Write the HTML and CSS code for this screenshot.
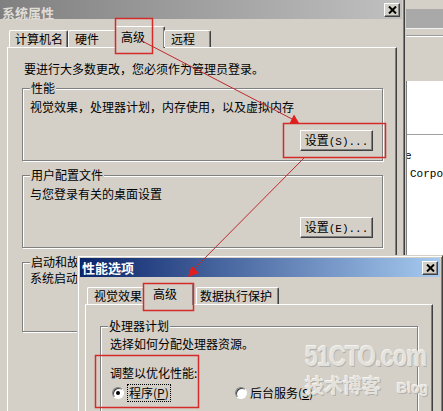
FILE: index.html
```html
<!DOCTYPE html>
<html lang="zh-CN">
<head>
    <meta charset="UTF-8">
    <meta name="viewport" content="width=device-width, initial-scale=1.0">
    <title>系统属性 - 性能选项</title>
    <link rel="stylesheet" href="styles.css">
</head>
<body>
    <div class="desk">
        <div class="bg-window">
            <div class="bg-title"></div>
            <div class="bg-menu">
                <div class="bg-rule"></div>
            </div>
            <div class="bg-client">
                <div class="bg-line"></div>
                <div class="bg-text cut">e</div>
                <div class="bg-text">Corpor</div>
            </div>
        </div>

        <div class="window sys">
            <div class="titlebar inactive">
                <span class="title">系统属性</span>
                <span class="close">
                    <svg width="9" height="8" viewBox="0 0 9 8"><path d="M1 0.5 L8 7.5 M8 0.5 L1 7.5" stroke="#000" stroke-width="2" fill="none"/></svg>
                </span>
            </div>
            <div class="tabs">
                <div class="tab t-computer">计算机名</div>
                <div class="tab t-hardware">硬件</div>
                <div class="tab on t-advanced">高级</div>
                <div class="tab t-remote">远程</div>
            </div>
            <div class="panel">
                <p class="intro">要进行大多数更改，您必须作为管理员登录。</p>
                <fieldset class="group">
                    <legend>性能</legend>
                    <p>视觉效果，处理器计划，内存使用，以及虚拟内存</p>
                    <div class="btn-row"><button class="button">设置<span class="lat">(S)...</span></button></div>
                </fieldset>
                <fieldset class="group">
                    <legend>用户配置文件</legend>
                    <p>与您登录有关的桌面设置</p>
                    <div class="btn-row"><button class="button">设置<span class="lat">(E)...</span></button></div>
                </fieldset>
                <fieldset class="group startup">
                    <legend>启动和故障恢复</legend>
                    <p>系统启动、系统失败和调试信息</p>
                </fieldset>
            </div>
        </div>

        <div class="window perf">
            <div class="titlebar active">
                <span class="title">性能选项</span>
                <span class="close">
                    <svg width="9" height="8" viewBox="0 0 9 8"><path d="M1 0.5 L8 7.5 M8 0.5 L1 7.5" stroke="#000" stroke-width="2" fill="none"/></svg>
                </span>
            </div>
            <div class="tabs">
                <div class="tab t-visual">视觉效果</div>
                <div class="tab on t-adv2">高级</div>
                <div class="tab t-dep">数据执行保护</div>
            </div>
            <div class="panel">
                <fieldset class="group">
                    <legend>处理器计划</legend>
                    <p>选择如何分配处理器资源。</p>
                    <p class="opt-title">调整以优化性能:</p>
                    <div class="radios">
                        <label class="choice"><span class="radio on"></span><span class="focus">程序(<u>P</u>)</span></label>
                        <label class="choice"><span class="radio"></span><span>后台服务(<u>S</u>)</span></label>
                    </div>
                </fieldset>
            </div>
        </div>

        <div class="watermark">
            <div class="wm-big">51CTO.com</div>
            <div class="wm-small"><span>技术博客</span><span class="wm-blog">Blog</span></div>
        </div>

        <svg class="marks" width="443" height="411" viewBox="0 0 443 411">
            <g fill="none" stroke="#d42a2a" stroke-width="1.5">
                <rect x="115.5" y="18.5" width="37" height="35"/>
                <rect x="283.5" y="123.5" width="102" height="34"/>
                <rect x="143.5" y="283.5" width="50" height="27"/>
                <rect x="95.5" y="355.5" width="103" height="52"/>
            </g>
            <g stroke="#c0282d" stroke-width="1">
                <line x1="142" y1="41" x2="292" y2="119"/>
                <line x1="304" y1="158" x2="194" y2="269"/>
            </g>
            <g fill="#e01e1e">
                <polygon points="299,123 289.5,123.5 294,114.5"/>
                <polygon points="188,277 191.5,266 199,273"/>
            </g>
        </svg>
    </div>
</body>
</html>
```

FILE: styles.css
```css
body {
    margin: 0;
    background-color: #d4d0c8;
    font-family: "Noto Sans CJK SC", "Noto Sans", sans-serif;
    font-size: 12px;
    line-height: 16px;
    color: #000;
}
.desk {
    position: relative;
    width: 443px;
    height: 411px;
    overflow: hidden;
}

/* window behind, on the right */
.bg-window {
    position: absolute;
    left: 405px;
    top: 0;
    width: 38px;
    height: 411px;
    padding-left: 1px;
    padding-top: 9px;
    box-sizing: border-box;
    display: flex;
    flex-direction: column;
    background: #d4d0c8;
}
.bg-title {
    height: 19px;
    background: #a9a9a9;
}
.bg-menu {
    height: 52px;
    border-top: 1px solid #f2f2f2;
}
.bg-rule {
    margin-top: 6px;
    border-top: 1px solid #9a9a9a;
    border-bottom: 1px solid #fff;
}
.bg-client {
    flex: 1;
    background: #fff;
    border-left: 1px solid #808080;
    overflow: hidden;
}
.bg-line {
    margin-top: 53px;
    border-top: 1px solid #a0a0a0;
}
.bg-text {
    font-family: "Liberation Mono", monospace;
    font-size: 11px;
    line-height: 14px;
    margin-left: 3px;
    white-space: nowrap;
}
.bg-text.cut {
    margin-top: 14px;
    margin-left: -2px;
}
.bg-text.cut + .bg-text {
    margin-top: 4px;
}

/* classic windows */
.window {
    position: absolute;
    background: #d4d0c8;
    border: 1px solid;
    border-color: #d4d0c8 #404040 #404040 #d4d0c8;
    box-shadow: inset 1px 1px #fff, inset -1px -1px #808080;
    padding: 2px;
    box-sizing: border-box;
    display: flex;
    flex-direction: column;
}
.sys {
    left: -3px;
    top: -3px;
    width: 408px;
    height: 420px;
}
.perf {
    left: 77px;
    top: 255px;
    width: 366px;
    height: 170px;
    z-index: 2;
}
.titlebar {
    height: 19px;
    flex: none;
    display: flex;
    align-items: center;
    justify-content: space-between;
    padding: 0 2px;
    color: #fff;
    font-size: 13px;
    font-weight: bold;
    line-height: 19px;
}
.titlebar.inactive {
    background: linear-gradient(to right, #808080, #c0c0c0);
    color: #e0ddd6;
}
.titlebar.inactive .title {
    padding-top: 5px;
}
.titlebar.active {
    background: linear-gradient(to right, #0a246a, #a6caf0);
}
.close {
    width: 16px;
    height: 14px;
    box-sizing: border-box;
    background: #d4d0c8;
    border: 1px solid;
    border-color: #fff #404040 #404040 #fff;
    box-shadow: inset -1px -1px #808080;
    display: flex;
    align-items: center;
    justify-content: center;
}

/* tabs */
.tabs {
    display: flex;
    align-items: flex-end;
    height: 21px;
    flex: none;
    position: relative;
    z-index: 1;
}
.sys .tabs {
    margin: 7px 0 0 9px;
}
.perf .tabs {
    margin: 6px 0 0 7px;
}
.tab {
    height: 17px;
    box-sizing: border-box;
    border: 1px solid #fff;
    border-right-color: #404040;
    border-bottom: 0;
    border-radius: 2px 2px 0 0;
    box-shadow: inset -1px 0 #808080;
    background: #d4d0c8;
    white-space: nowrap;
}
.tab.on {
    height: 22px;
    margin: 0 -1px -1px -2px;
    padding-top: 2px;
}
.t-computer { width: 59px; padding-left: 5px; }
.t-hardware { width: 49px; padding-left: 6px; }
.t-advanced { width: 50px; padding-left: 5px; }
.t-remote { width: 47px; padding-left: 6px; }
.t-visual { width: 58px; padding-left: 6px; }
.t-adv2 { width: 51px; padding-left: 9px; }
.tab.t-adv2 { margin-right: 2px; }
.t-dep { width: 83px; padding-left: 3px; }

/* tab page */
.panel {
    flex: 1;
    border: 1px solid;
    border-color: #fff #404040 #404040 #fff;
    box-shadow: inset -1px -1px #808080;
}
.sys .panel {
    margin: 0 5px 0 7px;
    padding-top: 13px;
}
.perf .panel {
    margin: 0 7px 0 5px;
    padding-top: 14px;
}
.intro {
    margin: 0 0 0 16px;
}

/* group boxes */
.group {
    margin: 4px 13px 0 14px;
    padding: 0 9px 9px 7px;
    border: 1px solid #808080;
    box-shadow: 1px 1px #fff, inset 1px 1px #fff;
    min-width: 0;
}
.group + .group {
    margin-top: 7px;
}
.group legend {
    padding: 0 1px;
    line-height: 14px;
    background: #d4d0c8;
}
.group p {
    margin: 4px 0 0;
}
.group.startup {
    padding-bottom: 45px;
}
.group.startup p {
    margin-top: 1px;
}
.perf .group {
    margin: 0 14px;
    padding-left: 9px;
}
.perf .group legend {
    margin-left: -2px;
}
.perf .group p {
    margin-top: 3px;
}
.perf .group .opt-title {
    margin-top: 13px;
}
.btn-row {
    display: flex;
    justify-content: flex-end;
    margin-top: 15px;
}
.button {
    width: 73px;
    height: 21px;
    padding: 0;
    font-family: inherit;
    font-size: 12px;
    line-height: 16px;
    color: #000;
    background: #d4d0c8;
    border: 1px solid;
    border-color: #fff #404040 #404040 #fff;
    box-shadow: inset -1px -1px #808080;
}
.lat {
    font-family: "Liberation Mono", monospace;
    font-size: 11px;
}

/* radio buttons */
.radios {
    display: flex;
    align-items: center;
    margin-top: 3px;
}
.choice {
    display: flex;
    align-items: center;
    gap: 3px;
}
.choice:first-child {
    width: 123px;
    margin-left: 2px;
}
.radio {
    width: 12px;
    height: 12px;
    box-sizing: border-box;
    border-radius: 50%;
    background: #fff;
    border: 1px solid;
    border-color: #808080 #fff #fff #808080;
    box-shadow: inset 1px 1px #404040, 0 0 0 0.5px #d4d0c8;
    position: relative;
}
.radio.on::after {
    content: '';
    position: absolute;
    left: 3px;
    top: 3px;
    width: 4px;
    height: 4px;
    border-radius: 50%;
    background: #000;
}
.focus {
    border: 1px dotted #000;
    padding: 0 1px;
}

/* watermark and annotations on top */
.watermark {
    position: absolute;
    left: 305px;
    top: 340px;
    z-index: 4;
    color: #e4e2dd;
    text-shadow: 1px 1px 0 #b2b0aa, -1px -1px 0 #f4f3f0;
    font-family: "Liberation Sans", Arial, sans-serif;
    font-weight: bold;
}
.wm-big {
    font-size: 29px;
    line-height: 32px;
    letter-spacing: -1px;
    transform: scaleX(0.8);
    transform-origin: left center;
    white-space: nowrap;
}
.wm-small {
    display: flex;
    align-items: baseline;
    gap: 16px;
    margin-top: 1px;
    font-family: "Noto Sans CJK SC", sans-serif;
    font-size: 19px;
    line-height: 24px;
}
.wm-blog {
    font-family: "Liberation Sans", Arial, sans-serif;
    font-size: 14px;
}
.marks {
    position: absolute;
    left: 0;
    top: 0;
    z-index: 5;
    pointer-events: none;
}
```
